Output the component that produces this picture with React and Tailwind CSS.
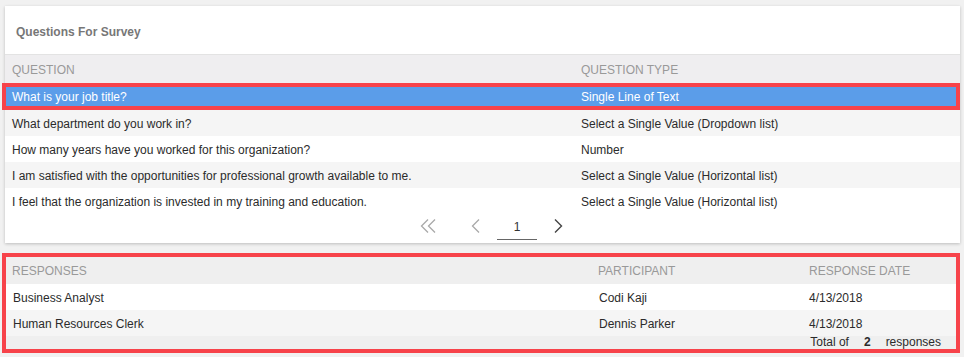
import React from "react";

const questions = [
  ["What department do you work in?", "Select a Single Value (Dropdown list)", "bg-[#f5f5f5]"],
  ["How many years have you worked for this organization?", "Number", "bg-white"],
  ["I am satisfied with the opportunities for professional growth available to me.", "Select a Single Value (Horizontal list)", "bg-[#f5f5f5]"],
  ["I feel that the organization is invested in my training and education.", "Select a Single Value (Horizontal list)", "bg-white"],
];

function DoubleLeft() {
  return (
    <svg width="16" height="14" viewBox="0 0 16 14" fill="none" stroke="#a9a9a9" strokeWidth="1.3">
      <path d="M8 0.5 L1.5 7 L8 13.5" />
      <path d="M15 0.5 L8.5 7 L15 13.5" />
    </svg>
  );
}
function Left() {
  return (
    <svg width="9" height="14" viewBox="0 0 9 14" fill="none" stroke="#a9a9a9" strokeWidth="1.3">
      <path d="M8 0.5 L1.5 7 L8 13.5" />
    </svg>
  );
}
function Right() {
  return (
    <svg width="9" height="14" viewBox="0 0 9 14" fill="none" stroke="#444" strokeWidth="1.4">
      <path d="M1 0.5 L7.5 7 L1 13.5" />
    </svg>
  );
}

export default function App() {
  return (
    <div
      className="w-[964px] h-[357px] bg-[#f1f1f1] pt-[6px] text-[12px] text-[#2b2b2b] overflow-hidden"
      style={{ fontFamily: '"Liberation Sans", Arial, sans-serif' }}
    >
      {/* Card */}
      <div className="ml-[5px] w-[955px] bg-white shadow-[0_1px_3px_rgba(0,0,0,0.22)]">
        <div className="h-[49px] flex items-center pl-[11px] pt-[3px] border-b border-[#e3e3e3]">
          <span className="font-bold text-[#777]">Questions For Survey</span>
        </div>
        <div className="h-[28px] grid grid-cols-[576px_1fr] items-center pt-[2px] bg-[#efeef0] text-[#999]">
          <div className="pl-[7px]">QUESTION</div>
          <div>QUESTION TYPE</div>
        </div>
        <div className="relative h-[27px] grid grid-cols-[576px_1fr] items-center pt-[1px] bg-[#5b9de9] text-white">
          <div className="pl-[7px]">What is your job title?</div>
          <div>Single Line of Text</div>
          <span className="absolute top-0 bottom-0 left-[-3px] right-0 border-4 border-[#f7434a]" />
        </div>
        {questions.map(([q, t, bg]) => (
          <div key={q} className={`h-[26px] grid grid-cols-[576px_1fr] items-center pt-[1px] ${bg}`}>
            <div className="pl-[7px]">{q}</div>
            <div>{t}</div>
          </div>
        ))}
        <div className="h-[29px] flex items-start pl-[415px]">
          <div className="mt-[5px]"><DoubleLeft /></div>
          <div className="mt-[5px] ml-[35px]"><Left /></div>
          <div className="ml-[17px] w-[40px] h-[26px] flex items-center justify-center border-b border-[#666] text-[#333]">1</div>
          <div className="mt-[5px] ml-[17px]"><Right /></div>
        </div>
      </div>

      {/* Responses */}
      <div className="mt-[10px] ml-[2px] w-[958px] border-4 border-[#f7434a]">
        <div className="h-[27px] grid grid-cols-[592px_211px_1fr] items-center bg-[#efefef] text-[#999]">
          <div className="pl-[6px]">RESPONSES</div>
          <div>PARTICIPANT</div>
          <div>RESPONSE DATE</div>
        </div>
        <div className="h-[26px] grid grid-cols-[592px_211px_1fr] items-center pt-[1px] bg-white">
          <div className="pl-[7px]">Business Analyst</div>
          <div className="pl-[1px]">Codi Kaji</div>
          <div>4/13/2018</div>
        </div>
        <div className="h-[26px] grid grid-cols-[592px_211px_1fr] items-center pt-[1px] bg-[#f5f5f5]">
          <div className="pl-[7px]">Human Resources Clerk</div>
          <div className="pl-[1px]">Dennis Parker</div>
          <div>4/13/2018</div>
        </div>
        <div className="h-[13px] flex items-center justify-end pr-[15px] bg-[#efefef] leading-[13px]">
          <span>Total of</span>
          <span className="ml-[15px] font-bold">2</span>
          <span className="ml-[15px]">responses</span>
        </div>
      </div>
    </div>
  );
}
